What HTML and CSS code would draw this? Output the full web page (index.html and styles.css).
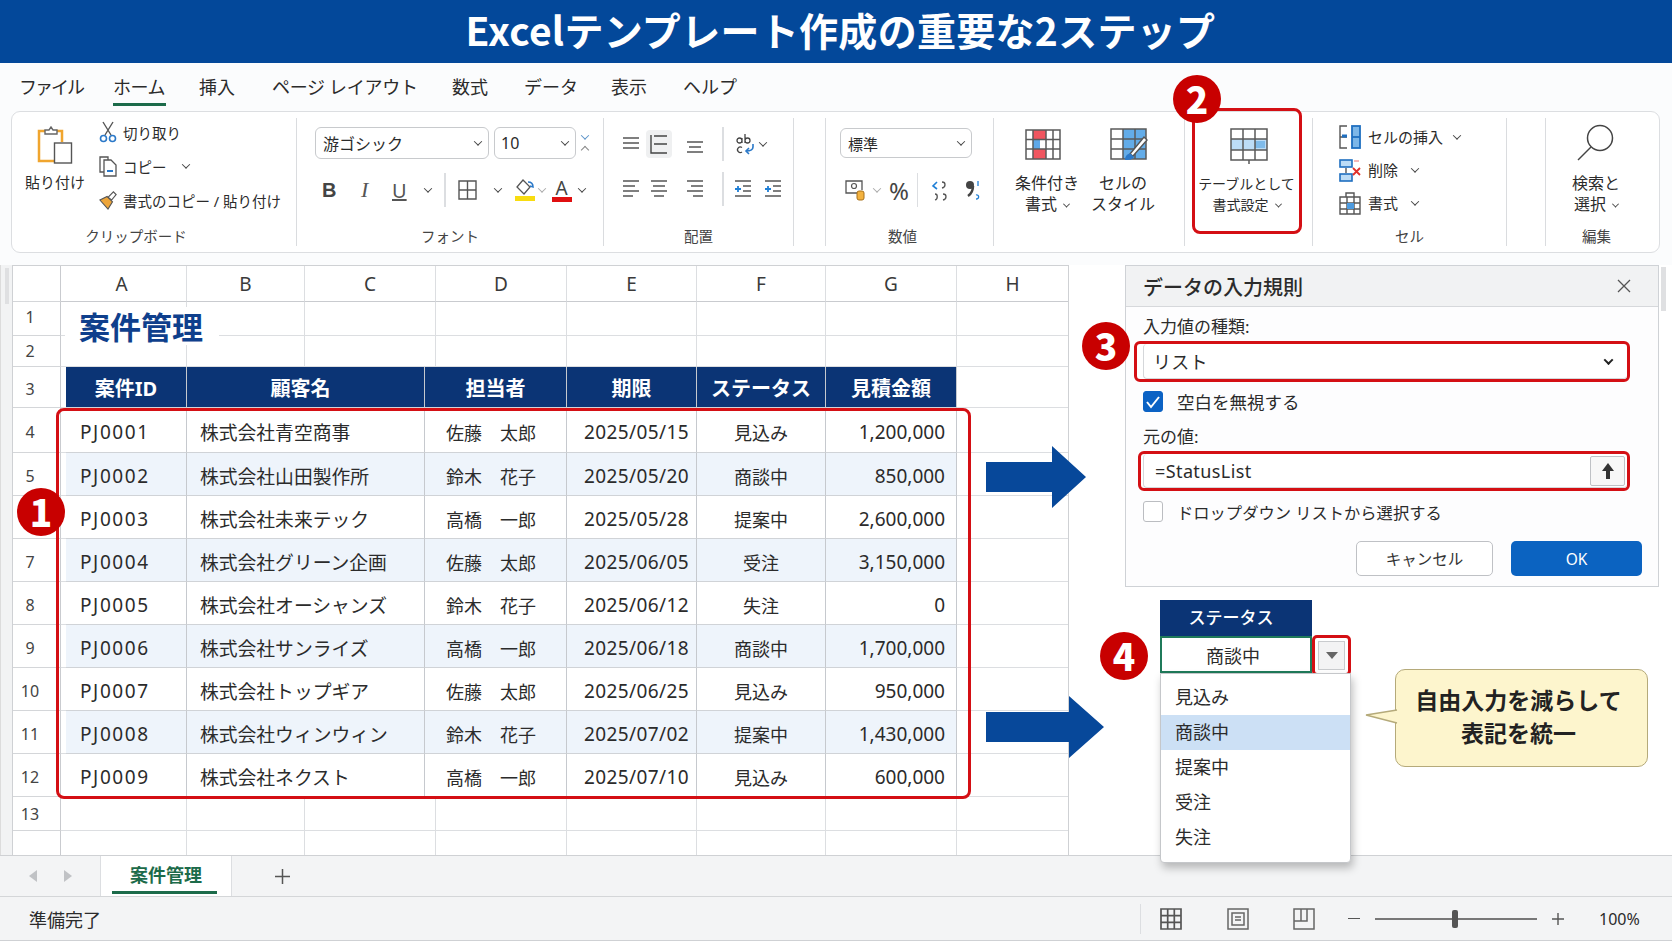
FILE: index.html
```html
<!DOCTYPE html>
<html lang="ja">
<head>
    <meta charset="UTF-8">
    <title>Excelテンプレート作成の重要な2ステップ</title>
    <link rel="stylesheet" href="styles.css">
</head>
<body>
<div class="page">
    <header class="title-bar">Excelテンプレート作成の重要な2ステップ</header>

    <nav class="menu">
        <span class="m-file">ファイル</span>
        <span class="m-home">ホーム</span>
        <span class="m-ins">挿入</span>
        <span class="m-page">ページ レイアウト</span>
        <span class="m-calc">数式</span>
        <span class="m-data">データ</span>
        <span class="m-view">表示</span>
        <span class="m-help">ヘルプ</span>
    </nav>

    <section class="ribbon">
        <!-- クリップボード -->
        <div class="group g-clip">
            <div class="group-body clip-body">
                <div class="paste">
                    <svg width="36" height="38" viewBox="0 0 36 38"><path d="M8 5H2v30h15" fill="none" stroke="#f0a52e" stroke-width="2.5"/><path d="M19 5h6v11" fill="none" stroke="#f0a52e" stroke-width="2.5"/><path d="M8 8V4h4l2-3 2 3h4v4z" fill="#fff" stroke="#666" stroke-width="1.4"/><rect x="17.500" y="17" width="17" height="20" fill="#fff" stroke="#555" stroke-width="1.4"/></svg>
                    <span>貼り付け</span>
                </div>
                <div class="clip-list">
                    <div class="clip-row">
                        <svg width="18" height="22" viewBox="0 0 18 22"><path d="M4 1l8 13M14 1L6 14" stroke="#555" stroke-width="1.4" fill="none"/><circle cx="4.500" cy="17.500" r="3" fill="none" stroke="#2a78c8" stroke-width="1.6"/><circle cx="13.500" cy="17.500" r="3" fill="none" stroke="#2a78c8" stroke-width="1.6"/></svg>
                        <span>切り取り</span>
                    </div>
                    <div class="clip-row">
                        <svg width="18" height="22" viewBox="0 0 18 22"><path d="M5 17H1V2h8v3" fill="none" stroke="#555" stroke-width="1.3"/><path d="M5 5h7l5 5v11H5z" fill="#fff" stroke="#555" stroke-width="1.3"/><path d="M8 16h6" stroke="#2a78c8" stroke-width="2"/></svg>
                        <span>コピー</span><i class="chev chev-copy"></i>
                    </div>
                    <div class="clip-row">
                        <svg width="18" height="22" viewBox="0 0 20 22"><path d="M1 11l8-4 6 6-5 8z" fill="#eda53a" stroke="#555" stroke-width="1.2"/><path d="M10 8l6-6 3 3-5 6z" fill="#fff" stroke="#555" stroke-width="1.3"/></svg>
                        <span>書式のコピー / 貼り付け</span>
                    </div>
                </div>
            </div>
            <div class="group-label lbl-clip">クリップボード</div>
        </div>

        <!-- フォント -->
        <div class="group g-font">
            <div class="group-body font-body">
                <div class="font-top">
                    <div class="combo combo-font">游ゴシック<i class="chev"></i></div>
                    <div class="combo combo-size">10<i class="chev"></i></div>
                    <div class="stepper"><i class="chev chev-blue"></i><i class="chev chev-up"></i></div>
                </div>
                <div class="tool-row font-tools">
                    <b class="t-b">B</b><em class="t-i">I</em><u class="t-u">U</u><i class="chev chev-u"></i>
                    <span class="tool-sep sep-font"></span>
                    <svg class="t-grid" width="19" height="20" viewBox="0 0 19 20"><path d="M1 1h17v18H1zM9.500 1v18M1 10h17" fill="none" stroke="#555" stroke-width="1.4"/></svg>
                    <i class="chev chev-grid"></i>
                    <span class="color-tool tool-fill">
                        <svg width="20" height="17" viewBox="0 0 20 17"><path d="M8 1l7 7-6 7-7-7z" fill="#fff" stroke="#555" stroke-width="1.3"/><path d="M13 3c3 0 5 2 5 5l-3-1" fill="none" stroke="#2a78c8" stroke-width="1.6"/></svg>
                        <i class="bar bar-yellow"></i>
                    </span>
                    <i class="chev chev-pale"></i>
                    <span class="color-tool tool-color">
                        <span class="t-a">A</span>
                        <i class="bar bar-red"></i>
                    </span>
                    <i class="chev chev-a"></i>
                </div>
            </div>
            <div class="group-label">フォント</div>
        </div>

        <!-- 配置 -->
        <div class="group g-align">
            <div class="group-body align-body">
                <div class="tool-row">
                    <span class="a-cell"><svg width="18" height="14" viewBox="0 0 18 14"><path d="M1 1h16M1 6h16M1 11h16" stroke="#555" stroke-width="1.4"/></svg></span>
                    <span class="a-cell a-on"><svg width="18" height="20" viewBox="0 0 18 20"><path d="M1 1v18h16M4 2h13M4 10h13" stroke="#444" stroke-width="1.4" fill="none"/></svg></span>
                    <span class="a-cell a-third"><svg width="18" height="14" viewBox="0 0 18 14" class="a-low"><path d="M1 1h16M3 6h12M1 11h16" stroke="#555" stroke-width="1.4"/></svg></span>
                    <span class="tool-sep sep-align"></span>
                    <svg class="wrap-ic" width="20" height="22" viewBox="0 0 20 22"><path d="M2 7.500a2.500 2.500 0 1 1 5 0a2.500 2.500 0 1 1-5 0M7 5v5M10 1v9M10 7.500a2.500 2.500 0 1 1 5 0a2.500 2.500 0 1 1-5 0M7 14.500a2.800 2.800 0 1 0 0 4.500" fill="none" stroke="#444" stroke-width="1.300"/><path d="M18 11v3c0 3-3 4-7 4m3-3l-3 3 3 3" fill="none" stroke="#2a78c8" stroke-width="1.600"/></svg>
                    <i class="chev chev-wrap"></i>
                </div>
                <div class="tool-row align-second">
                    <span class="a-cell"><svg width="18" height="20" viewBox="0 0 18 20"><path d="M1 2h16M1 7h12M1 12h16M1 17h10" stroke="#555" stroke-width="1.4"/></svg></span>
                    <span class="a-cell"><svg width="18" height="20" viewBox="0 0 18 20"><path d="M1 2h16M3 7h12M1 12h16M4 17h10" stroke="#555" stroke-width="1.4"/></svg></span>
                    <span class="a-cell a-third"><svg width="18" height="20" viewBox="0 0 18 20"><path d="M1 2h16M5 7h12M1 12h16M7 17h10" stroke="#555" stroke-width="1.4"/></svg></span>
                    <span class="tool-sep sep-align"></span>
                    <svg class="ind-ic" width="18" height="20" viewBox="0 0 18 20"><path d="M1 2h16M9 7h8M9 12h8M1 17h16" stroke="#555" stroke-width="1.4"/><path d="M1 10h6M4 7v6" stroke="#1f7fd6" stroke-width="1.8"/></svg>
                    <svg class="ind-ic ind-two" width="18" height="20" viewBox="0 0 18 20"><path d="M1 2h16M9 7h8M9 12h8M1 17h16" stroke="#555" stroke-width="1.4"/><path d="M1 10h6M4 7v6" stroke="#1f7fd6" stroke-width="1.8"/></svg>
                </div>
            </div>
            <div class="group-label">配置</div>
        </div>
        <div class="group group-gap"></div>

        <!-- 数値 -->
        <div class="group g-num">
            <div class="group-body num-body">
                <div class="combo combo-num">標準<i class="chev"></i></div>
                <div class="tool-row num-tools">
                    <svg width="20" height="22" viewBox="0 0 20 22"><path d="M13 14H1V2h16v9" fill="none" stroke="#555" stroke-width="1.3"/><circle cx="9" cy="7" r="2.500" fill="none" stroke="#555" stroke-width="1.2"/><rect x="12" y="12" width="7" height="9" rx="2" fill="#f3b23e" stroke="#a8701a"/></svg>
                    <i class="chev chev-pale chev-cur"></i>
                    <span class="t-pct">%</span>
                    <span class="tool-sep sep-num"></span>
                    <svg class="dec-ic" width="18" height="22" viewBox="0 0 18 22"><path d="M6 3L2 7l4 3" stroke="#1f7fd6" stroke-width="1.600" fill="none"/><path d="M11 3c4 0 4 5 0 6M4 15c3 0 3 5 0 6M12 15c4 0 4 5 0 6" stroke="#555" stroke-width="1.3" fill="none"/></svg>
                    <svg class="dec-ic dec-two" width="18" height="22" viewBox="0 0 18 22"><circle cx="6" cy="6" r="4" fill="#444"/><path d="M9 7c0 5-2 8-5 10" stroke="#444" stroke-width="2.500" fill="none"/><path d="M14 2v5M12 16c3-1 4 4 0 4" stroke="#1f7fd6" stroke-width="1.3" fill="none"/></svg>
                </div>
            </div>
            <div class="group-label lbl-num">数値</div>
        </div>

        <!-- スタイル -->
        <div class="group g-style">
            <div class="big-btn">
                <svg class="ic-cond" width="36" height="31" viewBox="0 0 36 31"><rect x="8" y="1" width="13" height="9" fill="#f0555f"/><rect x="8" y="10" width="7" height="10" fill="#5fa8e8"/><rect x="8" y="20" width="13" height="10" fill="#f0555f"/><path d="M1 1h34v29H1zM1 10.500h34M1 20h34M8 1v29M21 1v29M28 1v29" fill="none" stroke="#5a5a5a" stroke-width="1.5"/></svg>
                <span>条件付き</span>
                <span>書式<i class="chev chev-txt"></i></span>
            </div>
            <div class="big-btn">
                <svg class="ic-cell" width="38" height="33" viewBox="0 0 38 33"><rect x="13" y="1" width="23" height="30" fill="#63ace8"/><path d="M1 1h35v30H1zM1 11h35M1 21h35M13 1v30M25 1v30" fill="none" stroke="#5a5a5a" stroke-width="1.5"/><path d="M20 26L34 9l3 3-14 16z" fill="#fff" stroke="#555" stroke-width="1.4"/><path d="M15 32c0-4 3-7 6-6l3 3c-2 3-5 3-9 3z" fill="#2a78c8"/></svg>
                <span>セルの</span>
                <span>スタイル</span>
            </div>
        </div>

        <!-- テーブルとして書式設定 -->
        <div class="group g-table">
            <div class="big-btn big-wide">
                <svg width="38" height="36" viewBox="0 0 38 36"><rect x="1" y="11" width="36" height="11" fill="#bcdcf6"/><rect x="25" y="13" width="10" height="7" fill="#7fbbea"/><path d="M1 1h36v31H1zM1 11h36M1 22h36M13 1v31M25 1v31M19 32v4" fill="none" stroke="#5a5a5a" stroke-width="1.5"/></svg>
                <span>テーブルとして</span>
                <span>書式設定<i class="chev chev-txt"></i></span>
            </div>
        </div>

        <!-- セル -->
        <div class="group g-cells">
            <div class="group-body cells-body">
                <div class="cell-row">
                    <svg width="22" height="24" viewBox="0 0 22 24"><path d="M8 1H1v22h7M1 12h7" fill="none" stroke="#555" stroke-width="1.4"/><path d="M3 11h5" stroke="#1f6fc0" stroke-width="3"/><rect x="13" y="1" width="8" height="22" fill="#7db7e8" stroke="#1f6fc0" stroke-width="1.8"/><path d="M13 12h8" stroke="#1f6fc0" stroke-width="1.8"/></svg>
                    <span>セルの挿入</span><i class="chev chev-ins"></i>
                </div>
                <div class="cell-row">
                    <svg width="22" height="24" viewBox="0 0 22 24"><rect x="1" y="2" width="12" height="7" fill="#bcdcf6" stroke="#1f6fc0" stroke-width="1.6"/><rect x="1" y="16" width="12" height="7" fill="#bcdcf6" stroke="#1f6fc0" stroke-width="1.6"/><path d="M7 10v5" stroke="#555" stroke-width="1.4"/><path d="M14 10l7 7m0-7l-7 7" stroke="#e0302a" stroke-width="1.8"/><path d="M15 3h5" stroke="#e88" stroke-width="1.2"/></svg>
                    <span>削除</span><i class="chev chev-del"></i>
                </div>
                <div class="cell-row">
                    <svg width="22" height="24" viewBox="0 0 22 24"><path d="M1 6h20v17H1zM7 6V2h8v4M1 12h20M1 18h20M8 6v17M15 6v17" fill="none" stroke="#555" stroke-width="1.4"/><rect x="8" y="12" width="7" height="6" fill="#4d9be0"/></svg>
                    <span>書式</span><i class="chev chev-del"></i>
                </div>
            </div>
            <div class="group-label">セル</div>
        </div>
        <div class="group group-gap2"></div>

        <!-- 編集 -->
        <div class="group g-edit">
            <div class="big-btn">
                <svg class="find-ic" width="38" height="37" viewBox="0 0 38 37"><circle cx="23" cy="14" r="12.500" fill="none" stroke="#444" stroke-width="1.5"/><path d="M14 23L1 36" stroke="#444" stroke-width="1.5"/></svg>
                <span>検索と</span>
                <span>選択<i class="chev chev-txt"></i></span>
            </div>
            <div class="group-label edit-label">編集</div>
        </div>
    </section>

    <main class="work">
        <div class="left-strip"><i></i></div>
        <div class="sheet">
            <div class="row grid-row head-row">
                <div class="rh"></div><div class="h-a">A</div><div>B</div><div>C</div><div>D</div><div>E</div><div>F</div><div>G</div><div>H</div>
            </div>
            <div class="top-rows">
                <div class="row grid-row r1"><div class="rh">1</div><div></div><div></div><div></div><div></div><div></div><div></div><div></div><div></div></div>
                <div class="row grid-row r2"><div class="rh">2</div><div></div><div></div><div></div><div></div><div></div><div></div><div></div><div></div></div>
                <div class="sheet-title">案件管理</div>
            </div>
            <div class="row tbl-row tbl-head">
                <div class="rh">3</div><div class="pad"></div><div>案件ID</div><div class="h-co">顧客名</div><div>担当者</div><div>期限</div><div>ステータス</div><div>見積金額</div><div class="after"></div>
            </div>
            <div class="row tbl-row first">
                <div class="rh">4</div><div class="pad"></div><div class="c-id">PJ0001</div><div class="c-co">株式会社青空商事</div><div class="c-who">佐藤　太郎</div><div class="c-date">2025/05/15</div><div class="c-st">見込み</div><div class="c-amt">1,200,000</div><div class="after"></div>
            </div>
            <div class="row tbl-row alt">
                <div class="rh">5</div><div class="pad"></div><div class="c-id">PJ0002</div><div class="c-co">株式会社山田製作所</div><div class="c-who">鈴木　花子</div><div class="c-date">2025/05/20</div><div class="c-st">商談中</div><div class="c-amt">850,000</div><div class="after"></div>
            </div>
            <div class="row tbl-row">
                <div class="rh"></div><div class="pad"></div><div class="c-id">PJ0003</div><div class="c-co">株式会社未来テック</div><div class="c-who">高橋　一郎</div><div class="c-date">2025/05/28</div><div class="c-st">提案中</div><div class="c-amt">2,600,000</div><div class="after"></div>
            </div>
            <div class="row tbl-row alt">
                <div class="rh">7</div><div class="pad"></div><div class="c-id">PJ0004</div><div class="c-co">株式会社グリーン企画</div><div class="c-who">佐藤　太郎</div><div class="c-date">2025/06/05</div><div class="c-st">受注</div><div class="c-amt">3,150,000</div><div class="after"></div>
            </div>
            <div class="row tbl-row">
                <div class="rh">8</div><div class="pad"></div><div class="c-id">PJ0005</div><div class="c-co">株式会社オーシャンズ</div><div class="c-who">鈴木　花子</div><div class="c-date">2025/06/12</div><div class="c-st">失注</div><div class="c-amt">0</div><div class="after"></div>
            </div>
            <div class="row tbl-row alt">
                <div class="rh">9</div><div class="pad"></div><div class="c-id">PJ0006</div><div class="c-co">株式会社サンライズ</div><div class="c-who">高橋　一郎</div><div class="c-date">2025/06/18</div><div class="c-st">商談中</div><div class="c-amt">1,700,000</div><div class="after"></div>
            </div>
            <div class="row tbl-row">
                <div class="rh">10</div><div class="pad"></div><div class="c-id">PJ0007</div><div class="c-co">株式会社トップギア</div><div class="c-who">佐藤　太郎</div><div class="c-date">2025/06/25</div><div class="c-st">見込み</div><div class="c-amt">950,000</div><div class="after"></div>
            </div>
            <div class="row tbl-row alt">
                <div class="rh">11</div><div class="pad"></div><div class="c-id">PJ0008</div><div class="c-co">株式会社ウィンウィン</div><div class="c-who">鈴木　花子</div><div class="c-date">2025/07/02</div><div class="c-st">提案中</div><div class="c-amt">1,430,000</div><div class="after"></div>
            </div>
            <div class="row tbl-row last">
                <div class="rh">12</div><div class="pad"></div><div class="c-id">PJ0009</div><div class="c-co">株式会社ネクスト</div><div class="c-who">高橋　一郎</div><div class="c-date">2025/07/10</div><div class="c-st">見込み</div><div class="c-amt">600,000</div><div class="after"></div>
            </div>
            <div class="row grid-row r13"><div class="rh">13</div><div></div><div></div><div></div><div></div><div></div><div></div><div></div><div></div></div>
            <div class="row grid-row r14"><div class="rh"></div><div></div><div></div><div></div><div></div><div></div><div></div><div></div><div></div></div>
        </div>

        <aside class="side">
            <div class="dialog">
                <div class="dlg-title"><span>データの入力規則</span>
                    <svg width="14" height="14" viewBox="0 0 14 14"><path d="M1 1l12 12M13 1L1 13" stroke="#555" stroke-width="1.3"/></svg>
                </div>
                <div class="dlg-body">
                    <div class="dlg-label">入力値の種類:</div>
                    <div class="red-field type-field">
                        <div class="dlg-input">リスト<i class="chev chev-dark"></i></div>
                    </div>
                    <label class="check-row first-check"><span class="check on"><svg width="16" height="14" viewBox="0 0 16 14"><path d="M2 7l4 5 8-10" fill="none" stroke="#fff" stroke-width="2"/></svg></span>空白を無視する</label>
                    <div class="dlg-label source-label">元の値:</div>
                    <div class="red-field source-field">
                        <div class="dlg-input">=StatusList
                            <span class="up-btn"><svg width="14" height="18" viewBox="0 0 14 18"><path d="M7 1l6 8H9v8H5V9H1z" fill="#333"/></svg></span>
                        </div>
                    </div>
                    <label class="check-row second-check"><span class="check"></span>ドロップダウン リストから選択する</label>
                    <div class="dlg-buttons">
                        <button class="btn-cancel">キャンセル</button>
                        <button class="btn-ok">OK</button>
                    </div>
                </div>
            </div>

            <div class="mini-row">
                <div class="mini">
                    <div class="mini-head">ステータス</div>
                    <div class="mini-cell-row">
                        <div class="mini-cell">商談中</div>
                        <div class="mini-drop"><span><i></i></span></div>
                    </div>
                    <ul class="drop-list">
                        <li>見込み</li>
                        <li class="sel">商談中</li>
                        <li>提案中</li>
                        <li>受注</li>
                        <li>失注</li>
                    </ul>
                </div>
                <div class="callout">
                    <svg class="tail" width="33" height="16" viewBox="0 0 33 16"><path d="M32 1L1 6l31 8" fill="#fdf5cd" stroke="#b5aa7a" stroke-width="1.3"/></svg>
                    自由入力を減らして<br>表記を統一
                </div>
            </div>
            <i class="side-scroll"></i>
        </aside>
    </main>

    <div class="tabs">
        <i class="tri tri-l"></i><i class="tri tri-r"></i>
        <div class="tab">案件管理</div>
        <svg class="plus" width="15" height="15" viewBox="0 0 15 15"><path d="M7.500 0v15M0 7.500h15" stroke="#555" stroke-width="1.5"/></svg>
    </div>

    <footer class="status">
        <span class="ready">準備完了</span>
        <span class="st-sep"></span>
        <svg class="st-ic" width="22" height="22" viewBox="0 0 22 22"><path d="M1 1h20v20H1zM1 7.700h20M1 14.300h20M7.700 1v20M14.300 1v20" fill="none" stroke="#555" stroke-width="1.700"/></svg>
        <svg class="st-ic st-page" width="22" height="22" viewBox="0 0 22 22"><path d="M1 1h20v20H1z" fill="none" stroke="#666" stroke-width="1.500"/><path d="M5 5h12v12H5z" fill="none" stroke="#666" stroke-width="1.500"/><path d="M8 9h6M8 12h6" stroke="#666" stroke-width="1.300"/></svg>
        <svg class="st-ic st-break" width="22" height="22" viewBox="0 0 22 22"><path d="M1 1h20v20H1zM1 13h13V1" fill="none" stroke="#666" stroke-width="1.500"/><path d="M8 1v12" stroke="#666" stroke-width="1.500"/></svg>
        <span class="zoom-minus"></span>
        <span class="zoom-track"><i></i></span>
        <svg class="zoom-plus" width="12" height="12" viewBox="0 0 12 12"><path d="M6 0v12M0 6h12" stroke="#555" stroke-width="1.400"/></svg>
        <span class="zoom-pct">100%</span>
    </footer>

    <!-- 赤枠・番号・矢印 -->
    <div class="hl hl-table"></div>
    <div class="hl hl-btn"></div>
    <div class="badge b1">1</div>
    <div class="badge b2">2</div>
    <div class="badge b3">3</div>
    <div class="badge b4">4</div>
    <svg class="arrow a1" width="100" height="62" viewBox="0 0 100 62"><path d="M0 16h66V0l34 31-34 31V46H0z" fill="#07489a"/></svg>
    <svg class="arrow a2" width="118" height="62" viewBox="0 0 118 62"><path d="M0 16h83V0l35 31-35 31V46H0z" fill="#07489a"/></svg>
</div>
</body>
</html>
```

FILE: styles.css
```css
* {
    box-sizing: border-box;
}
html, body {
    margin: 0;
    padding: 0;
}
body {
    font-family: "Noto Sans", "Noto Sans CJK JP", sans-serif;
    color: #2b2b2b;
    background: #fff;
}
.page {
    position: relative;
    width: 1672px;
    height: 941px;
    overflow: hidden;
    display: flex;
    flex-direction: column;
    background: #fbfcfd;
}

/* title */
.title-bar {
    flex: none;
    height: 63px;
    padding-left: 9px;
    background: #03489a;
    color: #fff;
    font-family: "Noto Sans CJK JP", sans-serif;
    font-size: 39px;
    font-weight: 700;
    letter-spacing: 0.300px;
    line-height: 58px;
    text-align: center;
}

/* menu */
.menu {
    flex: none;
    height: 48px;
    display: flex;
    padding-left: 19px;
    font-size: 18px;
    line-height: 48px;
}
.menu span {
    flex: none;
    position: relative;
}
.m-file { width: 94px; letter-spacing: -2px; }
.m-home { width: 86px; letter-spacing: -0.500px; }
.m-ins { width: 73px; }
.m-page { width: 180px; letter-spacing: -0.300px; }
.m-calc { width: 72px; }
.m-data { width: 87px; }
.m-view { width: 72px; }
.m-help { width: 60px; }
.m-home::after {
    content: "";
    position: absolute;
    left: 0;
    top: 40px;
    width: 53px;
    height: 3px;
    background: #1c6b4a;
}

/* ribbon */
.ribbon {
    flex: none;
    height: 142px;
    margin-left: 11px;
    width: 1649px;
    display: flex;
    background: #fff;
    border: 1.5px solid #dcdee1;
    border-radius: 9px;
}
.group {
    flex: none;
    height: 128px;
    margin-top: 6px;
    display: flex;
    flex-direction: column;
    border-right: 1.5px solid #dadcdf;
    font-size: 15px;
}
.group-body {
    flex: 1;
    min-height: 0;
}
.group-label {
    flex: none;
    height: 20px;
    line-height: 20px;
    text-align: center;
    font-size: 14.500px;
    color: #444;
}
.g-clip { width: 285px; }
.g-font { width: 307px; }
.g-align { width: 190px; }
.group-gap { width: 32px; }
.g-num { width: 168px; }
.g-style { width: 191px; flex-direction: row; padding-left: 15px; }
.g-table { width: 128px; align-items: center; }
.g-cells { width: 194px; }
.group-gap2 { width: 39px; }
.g-edit { width: 113px; border-right: none; }
.lbl-clip { padding-right: 36px; }
.lbl-num { padding-right: 14px; }
.edit-label { padding-right: 12px; margin-top: auto; }

.chev {
    display: inline-block;
    flex: none;
    width: 6px;
    height: 6px;
    border-right: 1.5px solid #444;
    border-bottom: 1.5px solid #444;
    transform: rotate(45deg) translate(-1px, -1px);
}
.chev-blue { border-color: #5b93c9; }
.chev-up { border-color: #888; transform: rotate(225deg); margin-top: 7px; }
.chev-pale { border-color: #aaa; }
.chev-dark { border-color: #222; width: 7px; height: 7px; border-width: 2px; }
.chev-txt { margin-left: 7px; width: 5px; height: 5px; }

/* clipboard */
.clip-body {
    display: flex;
    padding-left: 4px;
}
.paste {
    width: 78px;
    padding-top: 8px;
    display: flex;
    flex-direction: column;
    align-items: center;
    gap: 7px;
    font-size: 15px;
    margin-left: 0;
}
.clip-list {
    margin: -3px 0 0 5px;
}
.clip-row {
    height: 34px;
    display: flex;
    align-items: center;
    gap: 6px;
    font-size: 14.500px;
}
.clip-row svg { flex: none; }
.chev-copy { margin-left: 10px; }

/* font */
.font-body { padding: 9px 0 0 18px; }
.font-top {
    display: flex;
    align-items: center;
}
.combo {
    height: 32px;
    display: flex;
    align-items: center;
    justify-content: space-between;
    padding: 0 7px;
    border: 1.5px solid #c8cacd;
    border-radius: 6px;
    font-size: 16px;
    background: #fff;
}
.combo-font { width: 174px; }
.combo-size { width: 82px; margin-left: 5px; padding-left: 6px; }
.stepper {
    margin-left: 6px;
    display: flex;
    flex-direction: column;
    align-items: center;
}
.tool-row {
    height: 28px;
    display: flex;
    align-items: center;
}
.font-tools {
    margin-top: 17px;
    padding-left: 7px;
}
.t-b { font-size: 20px; font-weight: 700; width: 39px; color: #444; font-family: "Liberation Sans", sans-serif; }
.t-i { font-size: 22px; width: 31px; font-family: "Liberation Serif", serif; color: #555; }
.t-u { font-size: 20px; width: 33px; color: #555; }
.chev-u { margin-right: 0; }
.tool-sep {
    flex: none;
    width: 1.500px;
    height: 34px;
    background: #dcdee1;
}
.sep-font { margin: 0 12px 0 13px; }
.chev-grid { margin-left: 18px; }
.color-tool {
    flex: none;
    display: flex;
    flex-direction: column;
    align-items: center;
    width: 20px;
}
.tool-fill { margin-left: 14px; }
.tool-color { margin-left: 7px; }
.chev-pale { margin-left: 4px; }
.chev-a { margin-left: 7px; }
.bar {
    display: block;
    width: 20px;
    height: 5px;
}
.bar-yellow { background: #f8dc10; }
.bar-red { background: #e00f10; }
.t-a {
    font-size: 19px;
    line-height: 18px;
    color: #444;
}

/* align */
.align-body { padding: 12px 0 0 14px; }
.a-cell {
    flex: none;
    width: 26px;
    height: 28px;
    display: flex;
    align-items: center;
    justify-content: center;
    margin-right: 2px;
    border-radius: 4px;
}
.a-on { background: #eff0f1; }
.a-third { margin-left: 8px; }
.a-low { margin-top: 8px; }
.sep-align { margin: 0 10px 0 12px; }
.wrap-ic { margin-left: 1px; }
.chev-wrap { margin-left: 5px; }
.align-second { margin-top: 17px; }
.ind-ic { margin-left: 0; }
.ind-two { margin-left: 12px; }

/* number */
.num-body { padding: 10px 0 0 14px; }
.combo-num { width: 132px; height: 30px; font-size: 15px; }
.num-tools {
    margin-top: 18px;
    padding-left: 5px;
}
.chev-cur { margin-left: 9px; }
.t-pct { font-size: 24px; margin-left: 9px; color: #444; }
.sep-num { margin: 0 13px 0 8px; }
.dec-ic { flex: none; }
.dec-two { margin-left: 15px; }

/* big buttons */
.big-btn {
    width: 76px;
    display: flex;
    flex-direction: column;
    align-items: center;
    font-size: 16px;
    line-height: 21px;
    padding-top: 10px;
    white-space: nowrap;
}
.big-btn svg {
    height: 33px;
    margin-bottom: 12px;
}
.big-btn span {
    display: flex;
    align-items: center;
}
.big-btn .chev { margin-top: 1px; }
.big-btn .ic-cond { margin-right: 9px; }
.big-btn .ic-cell { margin-left: 12px; }
.big-wide svg {
    height: 36px;
    margin-bottom: 9px;
    margin-left: 4px;
}
.big-wide { width: 110px; font-size: 14px; margin-right: 4px; }
.g-edit .big-btn { width: 100px; padding-top: 6px; }
.g-edit .find-ic { height: 37px; margin-bottom: 12px; }

/* cells */
.cells-body { padding: 2px 0 0 26px; }
.cell-row {
    height: 33px;
    display: flex;
    align-items: center;
    font-size: 15px;
}
.cell-row svg { margin-right: 7px; }
.chev-ins { margin-left: 11px; }
.chev-del { margin-left: 14px; }

/* worksheet */
.work {
    flex: none;
    height: 590px;
    margin-top: 12px;
    display: flex;
    position: relative;
    z-index: 2;
    background: #fff;
}
.left-strip {
    flex: none;
    width: 12px;
    background: #f2f3f4;
    border-left: 1px solid #dcdcdc;
    padding: 3px 0 0 4px;
}
.left-strip i {
    display: block;
    width: 4px;
    height: 36px;
    background: #dfe0e2;
}
.sheet {
    flex: none;
    width: 1057px;
    height: 590px;
    overflow: hidden;
    border-top: 1.500px solid #cfd1d4;
    border-left: 1.500px solid #cfd1d4;
    border-right: 1.500px solid #cfd1d4;
    font-size: 19px;
}
.row {
    display: grid;
    align-items: stretch;
}
.grid-row {
    grid-template-columns: 48px 126px 118px 131px 131px 130px 129px 131px 1fr;
}
.tbl-row {
    grid-template-columns: 48px 5px 121px 238px 142px 130px 129px 131px 1fr;
}
.row > div {
    display: flex;
    align-items: center;
    justify-content: center;
    border-right: 1.500px solid #dcdee1;
    border-bottom: 1.500px solid #dcdee1;
}
.row > div:last-child { border-right: none; }
.row > .rh {
    border-right-color: #c9cbcf;
    border-bottom-color: #d4d6d9;
    font-size: 16px;
    color: #444;
    padding-right: 13px;
}
.tbl-row > .rh { padding-top: 3px; }
.r1 > .rh { padding-bottom: 3px; }
.head-row { height: 36px; color: #3a3a3a; }
.head-row > div { border-bottom-color: #c9cbcf; }
.head-row > .h-a { padding-right: 4px; }
.top-rows { position: relative; }
.r1 { height: 34px; }
.r2 { height: 31px; }
.sheet-title {
    position: absolute;
    left: 52px;
    top: 5px;
    padding: 0 16px 0 14px;
    background: #fff;
    color: #0f3f8c;
    font-family: "Noto Sans CJK JP", sans-serif;
    font-size: 31px;
    font-weight: 700;
    line-height: 38px;
}
.tbl-row { height: 43px; }
.tbl-row.first { height: 45px; }
.tbl-row.last { height: 43px; }
.tbl-head { height: 41px; }
.tbl-head > div:nth-child(n+3):nth-child(-n+8) {
    background: #0b3475;
    color: #fff;
    font-weight: 700;
    font-size: 20px;
    border-right-color: #7f96bb;
    border-bottom-color: #0b3475;
}
.tbl-head > .h-co { padding-right: 10px; }
.tbl-row > .pad { border-right: none; }
.alt > div:nth-child(n+3):nth-child(-n+8) { background: #eef4fb; }
.tbl-row > div:nth-child(n+3):nth-child(-n+8) {
    border-right-color: #c6c9ce;
    border-bottom-color: #d0d3d7;
}
.tbl-row > .c-id,
.tbl-row > .c-co,
.tbl-row > .c-who,
.tbl-row > .c-date,
.tbl-row > .c-st,
.tbl-row > .c-amt { padding-top: 4px; }
.tbl-row > .c-id { justify-content: flex-start; padding-left: 14px; font-size: 19px; letter-spacing: 1.600px; }
.tbl-row > .c-co { justify-content: flex-start; padding-left: 13px; font-size: 18.800px; white-space: nowrap; }
.tbl-row > .c-who { justify-content: flex-start; padding-left: 21px; font-size: 18px; }
.tbl-row > .c-date { justify-content: flex-end; padding-right: 7px; font-size: 19px; letter-spacing: 0.400px; }
.tbl-row > .c-st { font-size: 18px; }
.tbl-row > .c-amt { justify-content: flex-end; padding-right: 11px; font-size: 19px; }
.r13 { height: 34px; }
.r14 { height: 30px; }

/* right side */
.side {
    flex: none;
    position: relative;
    width: 603px;
    padding-left: 56px;
}
.side-scroll {
    position: absolute;
    right: 6px;
    top: 2px;
    width: 5px;
    height: 44px;
    background: #dfe0e2;
}
.dialog {
    width: 534px;
    height: 322px;
    background: #fdfdfe;
    border: 1.500px solid #cfd2d6;
}
.dlg-title {
    height: 41px;
    display: flex;
    align-items: center;
    justify-content: space-between;
    padding: 0 27px 0 17px;
    background: #f1f2f3;
    border-bottom: 1.500px solid #d6d8db;
    font-size: 20px;
    font-weight: 500;
}
.dlg-body { padding: 9px 16px 0 17px; }
.dlg-label {
    height: 22px;
    line-height: 22px;
    font-size: 17px;
}
.red-field {
    display: flex;
    border: 3px solid #d40f14;
    border-radius: 6px;
    background: #fff;
}
.type-field {
    height: 41px;
    width: 496px;
    margin: 3px 0 0 -9px;
    padding-left: 6px;
}
.source-field {
    height: 40px;
    width: 492px;
    margin: 3px 0 0 -5px;
    padding-left: 2px;
}
.dlg-input {
    flex: 1;
    position: relative;
    display: flex;
    align-items: center;
    justify-content: space-between;
    padding: 0 9px;
    font-size: 18px;
    letter-spacing: 0.300px;
    border-left: 1.500px solid #d5d7da;
    border-bottom: 1.500px solid #d5d7da;
    border-radius: 4px;
}
.chev-dark { margin-right: 6px; }
.source-field .dlg-input { padding: 0 2px 0 11px; letter-spacing: 0.400px; }
.up-btn {
    width: 35px;
    height: 30px;
    display: flex;
    align-items: center;
    justify-content: center;
    border: 1.500px solid #bfc1c5;
    background: #f7f7f7;
    border-radius: 2px;
}
.check-row {
    display: flex;
    align-items: center;
    height: 21px;
    font-size: 17.500px;
}
.first-check { margin-top: 9px; }
.second-check { margin-top: 10px; font-size: 16.300px; }
.check {
    flex: none;
    width: 20px;
    height: 21px;
    margin-right: 14px;
    border: 1.500px solid #bbbdc1;
    border-radius: 3px;
    display: flex;
    align-items: center;
    justify-content: center;
    background: #fff;
}
.check.on {
    background: #0b62c4;
    border-color: #0b62c4;
}
.source-label { margin-top: 14px; }
.dlg-buttons {
    margin-top: 19px;
    display: flex;
    justify-content: flex-end;
    gap: 18px;
}
.dlg-buttons button {
    height: 35px;
    font-family: inherit;
    font-size: 15.500px;
    border-radius: 5px;
    padding: 0;
}
.btn-cancel {
    width: 137px;
    background: #fff;
    border: 1.500px solid #bfc1c5;
    color: #333;
}
.btn-ok {
    width: 131px;
    background: #0b63c1;
    border: none;
    color: #fff;
}
.mini-row {
    display: flex;
    align-items: flex-start;
    margin: 13px 0 0 35px;
}
.mini {
    position: relative;
    flex: none;
    width: 191px;
}
.mini-head {
    width: 152px;
    height: 36px;
    line-height: 36px;
    text-align: center;
    padding-right: 10px;
    background: #0b3475;
    color: #fff;
    font-size: 17px;
    font-weight: 500;
}
.mini-cell-row {
    display: flex;
    align-items: flex-start;
    height: 37px;
}
.mini-cell {
    width: 152px;
    height: 37px;
    line-height: 36px;
    text-align: center;
    padding-right: 6px;
    border: 2px solid #1f7a5a;
    font-size: 18px;
}
.mini-drop {
    width: 39px;
    height: 41px;
    margin-top: -1px;
    padding: 3px;
    border: 3px solid #d40f14;
    border-radius: 5px;
    background: #fff;
}
.mini-drop span {
    display: flex;
    align-items: center;
    justify-content: center;
    width: 100%;
    height: 100%;
    background: #f3f3f4;
    border: 1px solid #c9cbce;
}
.mini-drop i {
    width: 0;
    height: 0;
    border-left: 6px solid transparent;
    border-right: 6px solid transparent;
    border-top: 7px solid #666;
}
.drop-list {
    position: absolute;
    left: 0;
    top: 73px;
    width: 191px;
    height: 190px;
    margin: 0;
    padding: 6px 0 0;
    list-style: none;
    background: #fff;
    border: 1px solid #c5c7ca;
    border-radius: 0 0 4px 4px;
    box-shadow: 2px 5px 8px rgba(0,0,0,0.25);
}
.drop-list li {
    height: 35px;
    line-height: 35px;
    padding-left: 14px;
    font-size: 18px;
}
.drop-list .sel { background: #cce0f5; }
.callout {
    position: relative;
    flex: none;
    width: 253px;
    height: 98px;
    margin: 69px 0 0 44px;
    padding: 13px 6px 0 0;
    text-align: center;
    background: #fdf5cd;
    border: 1.500px solid #b5aa7a;
    border-radius: 10px;
    font-size: 23px;
    font-weight: 700;
    line-height: 33px;
    color: #222;
    font-family: "Noto Sans CJK JP", sans-serif;
}
.tail {
    position: absolute;
    left: -31px;
    top: 39px;
}

/* sheet tabs */
.tabs {
    flex: none;
    height: 42px;
    display: flex;
    align-items: stretch;
    background: #f3f4f5;
    border-top: 1.500px solid #cfd1d4;
    border-bottom: 1.500px solid #d4d6d8;
    padding-left: 29px;
}
.tri {
    flex: none;
    align-self: center;
    width: 0;
    height: 0;
    border-top: 6.500px solid transparent;
    border-bottom: 6.500px solid transparent;
}
.tri-l { border-right: 8px solid #c0c2c5; }
.tri-r { border-left: 8px solid #c0c2c5; margin-left: 27px; }
.tab {
    position: relative;
    width: 132px;
    margin-left: 28px;
    text-align: center;
    line-height: 37px;
    background: #fff;
    border-left: 1px solid #dcdee1;
    border-right: 1px solid #dcdee1;
    color: #1c6b4a;
    font-size: 18px;
    font-weight: 700;
    font-family: "Noto Sans CJK JP", sans-serif;
}
.tab::after {
    content: "";
    position: absolute;
    left: 11px;
    right: 14px;
    bottom: 2px;
    height: 3px;
    background: #1c6b4a;
}
.plus {
    align-self: center;
    margin-left: 43px;
}

/* status bar */
.status {
    flex: 1;
    display: flex;
    align-items: center;
    background: #f3f4f5;
    border-bottom: 1.500px solid #cfd1d4;
    padding-left: 29px;
}
.ready {
    width: 1111px;
    font-size: 18px;
}
.st-sep {
    width: 1px;
    height: 30px;
    background: #dcdee1;
}
.st-ic { flex: none; margin-left: 19px; }
.st-page { margin-left: 45px; }
.st-break { margin-left: 44px; }
.zoom-minus {
    width: 12px;
    height: 1.500px;
    margin-left: 33px;
    background: #555;
}
.zoom-track {
    position: relative;
    width: 162px;
    height: 2px;
    margin-left: 15px;
    background: #777;
}
.zoom-track i {
    position: absolute;
    left: 77px;
    top: -8px;
    width: 6px;
    height: 18px;
    border-radius: 2px;
    background: #555;
}
.zoom-plus { margin-left: 15px; }
.zoom-pct {
    margin-left: 35px;
    font-size: 16px;
}

/* overlays */
.hl {
    position: absolute;
    border: 3px solid #d40f14;
    border-radius: 8px;
    z-index: 3;
}
.hl-table {
    left: 56px;
    top: 408px;
    width: 915px;
    height: 391px;
}
.hl-btn {
    left: 1192px;
    top: 108px;
    width: 110px;
    height: 126px;
}
.badge {
    position: absolute;
    z-index: 4;
    width: 48px;
    height: 48px;
    border-radius: 50%;
    background: #c80000;
    color: #fff;
    font-family: "Noto Sans CJK JP", sans-serif;
    font-size: 37px;
    font-weight: 900;
    line-height: 46px;
    text-align: center;
}
.b1 { left: 17px; top: 488px; }
.b2 { left: 1173px; top: 75px; }
.b3 { left: 1082px; top: 322px; }
.b4 { left: 1100px; top: 632px; }
.arrow {
    position: absolute;
    z-index: 3;
}
.a1 { left: 986px; top: 446px; }
.a2 { left: 986px; top: 696px; }
```
